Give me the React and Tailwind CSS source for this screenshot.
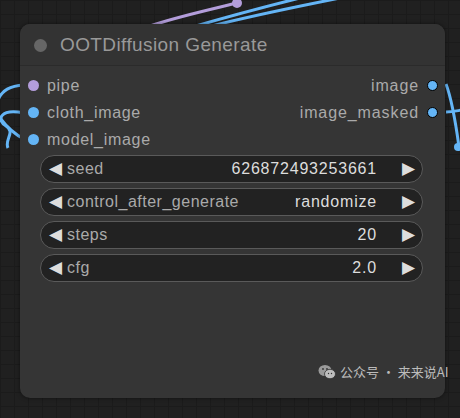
import React from 'react';

const FONT = { fontFamily: '"Liberation Sans", Arial, sans-serif' };

const inputs = [
  { name: 'pipe', color: 'bg-[#b39ddb]' },
  { name: 'cloth_image', color: 'bg-[#64b5f6]' },
  { name: 'model_image', color: 'bg-[#64b5f6]' },
];

const outputs = ['image', 'image_masked'];

const widgets = [
  { label: 'seed', value: '626872493253661' },
  { label: 'control_after_generate', value: 'randomize' },
  { label: 'steps', value: '20' },
  { label: 'cfg', value: '2.0' },
];

function Wires() {
  return (
    <svg className="absolute inset-0" width="460" height="418" fill="none">
      <path d="M150 26 C 180 16, 210 10, 240 2" stroke="#b39ddb" strokeWidth="3" />
      <circle cx="237" cy="3" r="5" fill="#b39ddb" />
      <path d="M196 26 C 230 16, 260 8, 300 -2" stroke="#64b5f6" strokeWidth="3" />
      <path d="M212 26 C 250 16, 290 8, 340 -2" stroke="#64b5f6" strokeWidth="3" />
      <path d="M24 85 C 10 86, 2 90, -2 100" stroke="#64b5f6" strokeWidth="3" />
      <path d="M24 113 C 0 108, -4 120, 6 126 C 16 132, 4 140, 8 148" stroke="#64b5f6" strokeWidth="3" />
      <path d="M24 139 C 14 134, 6 126, 0 118" stroke="#64b5f6" strokeWidth="3" />
      <path d="M446 84 C 452 100, 456 125, 459 147" stroke="#64b5f6" strokeWidth="3" />
      <path d="M446 112 C 452 112, 456 111, 462 110" stroke="#64b5f6" strokeWidth="3" />
      <circle cx="458" cy="147" r="4" fill="#64b5f6" />
    </svg>
  );
}

export default function App() {
  return (
    <div
      className="relative h-[418px] w-[460px] overflow-hidden bg-[#202020] bg-[linear-gradient(#1b1b1b_1px,transparent_1px),linear-gradient(90deg,#1b1b1b_1px,transparent_1px)] bg-[size:14px_14px]"
      style={FONT}
    >
      <Wires />
      <div className="absolute left-[20px] top-[24px] flex h-[374px] w-[425px] flex-col rounded-[10px] bg-[#353535] shadow-[0_0_4px_rgba(0,0,0,0.5)]">
        <div className="flex h-[42px] items-center gap-[13px] rounded-t-[10px] border-b border-[#2b2b2b] bg-[#333333] pl-[14px] pt-[2px]">
          <div className="h-[13px] w-[13px] rounded-full bg-[#666666]" />
          <span className="text-[19px] tracking-[0.4px] text-[#999999]">OOTDiffusion Generate</span>
        </div>
        <div className="relative pt-[6px]">
          {inputs.map((inp, i) => (
            <div key={inp.name} className="flex h-[27px] items-center justify-between">
              <div className="flex items-center gap-[8px] pl-[8px]">
                <div className={`h-[11px] w-[11px] rounded-full ${inp.color}`} />
                <span className="text-[16px] tracking-[0.7px] text-[#aaaaaa]">{inp.name}</span>
              </div>
              {outputs[i] ? (
                <div className="flex items-center gap-[8px] pr-[7px]">
                  <span className="text-[16px] tracking-[0.9px] text-[#aaaaaa]">{outputs[i]}</span>
                  <div className="h-[11px] w-[11px] rounded-full border border-black bg-[#64b5f6]" />
                </div>
              ) : null}
            </div>
          ))}
        </div>
        <div className="mt-[2px] flex flex-col gap-[5px] pl-[20px] pr-[22px]">
          {widgets.map((w) => (
            <div
              key={w.label}
              className="flex h-[28px] items-center rounded-full border border-[#5a5a5a] bg-[#222222] pl-[8px] pr-[7px] text-[16px] tracking-[0.5px]"
            >
              <span className="text-[17px] tracking-normal text-[#dddddd]">◀</span>
              <span className="ml-[5px] text-[#aaaaaa]">{w.label}</span>
              <span className="ml-auto mr-[25px] tracking-[0.8px] text-[#dddddd]">{w.value}</span>
              <span className="text-[17px] tracking-normal text-[#dddddd]">▶</span>
            </div>
          ))}
        </div>
      </div>
      <div className="absolute left-[318px] top-[362px] flex items-center gap-[4px] text-[13px] text-[#bbbbbb]" style={{ fontFamily: '"Noto Sans CJK SC", "Liberation Sans", sans-serif' }}>
        <svg width="18" height="16" viewBox="0 0 18 16">
          <ellipse cx="7" cy="6.5" rx="6.5" ry="5.5" fill="#9a9a9a" />
          <ellipse cx="12" cy="10" rx="5.5" ry="4.7" fill="#bdbdbd" stroke="#333" strokeWidth="0.8" />
          <circle cx="5" cy="5" r="0.9" fill="#333" />
          <circle cx="9" cy="5" r="0.9" fill="#333" />
          <circle cx="10.5" cy="9.5" r="0.7" fill="#333" />
          <circle cx="13.5" cy="9.5" r="0.7" fill="#333" />
        </svg>
        <span>公众号 · 来来说AI</span>
      </div>
    </div>
  );
}
